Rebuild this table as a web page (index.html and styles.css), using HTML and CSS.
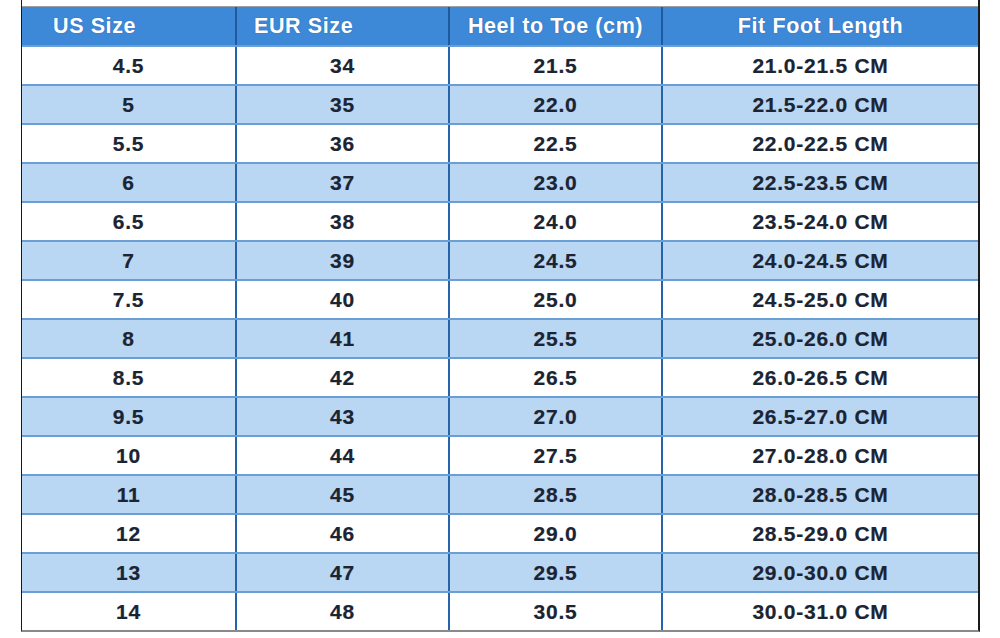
FILE: index.html
```html
<!DOCTYPE html>
<html>
<head>
<meta charset="utf-8">
<link rel="stylesheet" href="styles.css">
</head>
<body>
<div class="page">
  <div class="frame">
    <div class="topstrip"></div>
    <div class="table">
      <div class="row head">
        <div class="cell h1">US Size</div>
        <div class="cell h2">EUR Size</div>
        <div class="cell">Heel to Toe (cm)</div>
        <div class="cell">Fit Foot Length</div>
      </div>
      <div class="row"><div class="cell">4.5</div><div class="cell">34</div><div class="cell">21.5</div><div class="cell">21.0-21.5 CM</div></div>
      <div class="row alt"><div class="cell">5</div><div class="cell">35</div><div class="cell">22.0</div><div class="cell">21.5-22.0 CM</div></div>
      <div class="row"><div class="cell">5.5</div><div class="cell">36</div><div class="cell">22.5</div><div class="cell">22.0-22.5 CM</div></div>
      <div class="row alt"><div class="cell">6</div><div class="cell">37</div><div class="cell">23.0</div><div class="cell">22.5-23.5 CM</div></div>
      <div class="row"><div class="cell">6.5</div><div class="cell">38</div><div class="cell">24.0</div><div class="cell">23.5-24.0 CM</div></div>
      <div class="row alt"><div class="cell">7</div><div class="cell">39</div><div class="cell">24.5</div><div class="cell">24.0-24.5 CM</div></div>
      <div class="row"><div class="cell">7.5</div><div class="cell">40</div><div class="cell">25.0</div><div class="cell">24.5-25.0 CM</div></div>
      <div class="row alt"><div class="cell">8</div><div class="cell">41</div><div class="cell">25.5</div><div class="cell">25.0-26.0 CM</div></div>
      <div class="row"><div class="cell">8.5</div><div class="cell">42</div><div class="cell">26.5</div><div class="cell">26.0-26.5 CM</div></div>
      <div class="row alt"><div class="cell">9.5</div><div class="cell">43</div><div class="cell">27.0</div><div class="cell">26.5-27.0 CM</div></div>
      <div class="row"><div class="cell">10</div><div class="cell">44</div><div class="cell">27.5</div><div class="cell">27.0-28.0 CM</div></div>
      <div class="row alt"><div class="cell">11</div><div class="cell">45</div><div class="cell">28.5</div><div class="cell">28.0-28.5 CM</div></div>
      <div class="row"><div class="cell">12</div><div class="cell">46</div><div class="cell">29.0</div><div class="cell">28.5-29.0 CM</div></div>
      <div class="row alt"><div class="cell">13</div><div class="cell">47</div><div class="cell">29.5</div><div class="cell">29.0-30.0 CM</div></div>
      <div class="row"><div class="cell">14</div><div class="cell">48</div><div class="cell">30.5</div><div class="cell">30.0-31.0 CM</div></div>
    </div>
  </div>
</div>
</body>
</html>
```
FILE: styles.css
```css
html, body {
  margin: 0;
  padding: 0;
  background: #ffffff;
}
.page {
  width: 1000px;
  height: 638px;
  padding-left: 21px;
  box-sizing: border-box;
  font-family: "Liberation Sans", Arial, sans-serif;
}
.frame {
  width: 959px;
  box-sizing: border-box;
  border-left: 1px solid #1a1a1a;
  border-right: 2px solid #1a1a1a;
  border-bottom: 2px solid #8a8a8a;
}
.topstrip {
  height: 7px;
  border-bottom: 1px solid #a0a0a0;
  box-sizing: border-box;
}
.row {
  display: grid;
  grid-template-columns: 213px 213px 213px 1fr;
  height: 39px;
  box-sizing: border-box;
  border-top: 2px solid #6a9fd6;
  background: #ffffff;
}
.row.alt {
  background: #b9d6f2;
}
.row.head {
  height: 38px;
  border-top: 0;
  background: #3d88d7;
}
.cell {
  display: flex;
  align-items: center;
  justify-content: center;
  font-weight: bold;
  font-size: 21px;
  letter-spacing: 0.75px;
  color: #1b2433;
  -webkit-text-stroke: 0.2px #1b2433;
  border-left: 2px solid #2563ab;
}
.cell:first-child {
  border-left: 0;
}
.head .cell {
  color: #ffffff;
  -webkit-text-stroke: 0;
  font-size: 21.5px;
  letter-spacing: 0.6px;
  text-shadow: 0 0 1px rgba(20, 60, 120, 0.5);
  border-left-color: #1f5a9e;
}
.head .h1 {
  justify-content: flex-start;
  padding-left: 31px;
}
.head .h2 {
  justify-content: flex-start;
  padding-left: 17px;
}
```
